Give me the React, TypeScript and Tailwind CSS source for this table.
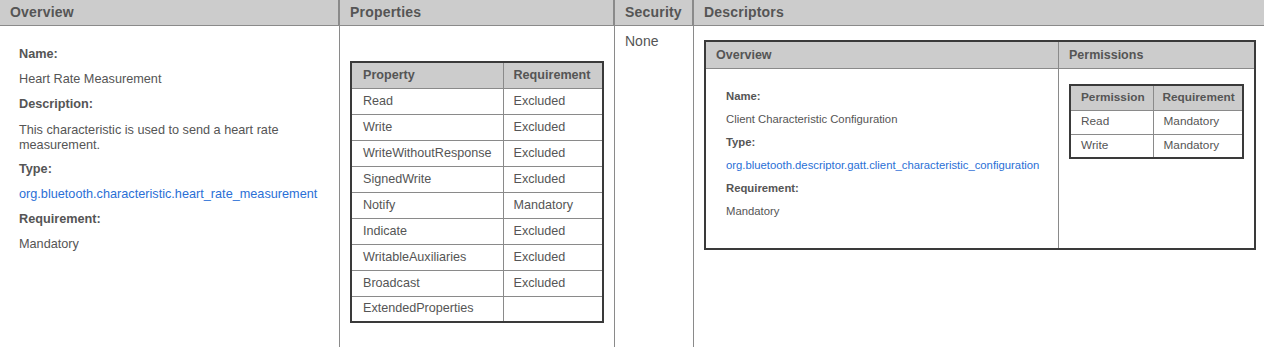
import React from "react"

const font = { fontFamily: '"Liberation Sans", Arial, sans-serif' }

const properties = [
    ["Read", "Excluded"],
    ["Write", "Excluded"],
    ["WriteWithoutResponse", "Excluded"],
    ["SignedWrite", "Excluded"],
    ["Notify", "Mandatory"],
    ["Indicate", "Excluded"],
    ["WritableAuxiliaries", "Excluded"],
    ["Broadcast", "Excluded"],
    ["ExtendedProperties", ""],
]

const permissions = [
    ["Read", "Mandatory"],
    ["Write", "Mandatory"],
]

function HeadCell({ children, last }: { children: React.ReactNode; last?: boolean }) {
    return (
        <div
            className={`h-[26px] bg-[#cccccc] border-b border-[#8a8a8a] px-[10px] flex items-center text-[14px] font-bold tracking-[0.2px] text-[#555] ${
                last ? "" : "border-r"
            }`}
        >
            {children}
        </div>
    )
}

export default function App() {
    return (
        <div style={font} className="w-[1264px] h-[347px] bg-white text-[#555] overflow-hidden">
            <div className="grid grid-cols-[340px_275px_79px_1fr] h-full">
                {/* Overview */}
                <div className="flex flex-col border-r border-[#8a8a8a]">
                    <HeadCell>Overview</HeadCell>
                    <div className="pl-[19px] pt-[16px] text-[12.7px] w-[320px]">
                        <div className="h-[25px] flex items-center font-bold">Name:</div>
                        <div className="h-[25px] flex items-center">Heart Rate Measurement</div>
                        <div className="h-[25px] flex items-center font-bold">Description:</div>
                        <div className="leading-[15px] pt-[6px] pb-[4px] pr-[10px]">
                            This characteristic is used to send a heart rate measurement.
                        </div>
                        <div className="h-[25px] flex items-center font-bold">Type:</div>
                        <div className="h-[25px] flex items-center text-[#2a6fd6]">
                            org.bluetooth.characteristic.heart_rate_measurement
                        </div>
                        <div className="h-[25px] flex items-center font-bold">Requirement:</div>
                        <div className="h-[25px] flex items-center">Mandatory</div>
                    </div>
                </div>

                {/* Properties */}
                <div className="flex flex-col border-r border-[#8a8a8a]">
                    <HeadCell>Properties</HeadCell>
                    <div className="pl-[10px] pt-[35px]">
                        <table className="table-fixed border-collapse border-2 border-[#3a3a3a] text-[12.6px] w-[254px]">
                            <thead>
                                <tr className="h-[26px] bg-[#cccccc]">
                                    <th className="border border-[#8a8a8a] text-left font-bold px-[11px] w-[152px]">Property</th>
                                    <th className="border border-[#8a8a8a] text-left font-bold px-[10px]">Requirement</th>
                                </tr>
                            </thead>
                            <tbody>
                                {properties.map(([p, r]) => (
                                    <tr key={p} className="h-[26px]">
                                        <td className="border border-[#8a8a8a] px-[11px] whitespace-nowrap">{p}</td>
                                        <td className="border border-[#8a8a8a] px-[10px]">{r}</td>
                                    </tr>
                                ))}
                            </tbody>
                        </table>
                    </div>
                </div>

                {/* Security */}
                <div className="flex flex-col border-r border-[#8a8a8a]">
                    <HeadCell>Security</HeadCell>
                    <div className="px-[10px] pt-[5px] text-[14px]">None</div>
                </div>

                {/* Descriptors */}
                <div className="flex flex-col">
                    <HeadCell last>Descriptors</HeadCell>
                    <div className="pl-[10px] pt-[14px] pr-[8px]">
                        <div className="border-2 border-[#3a3a3a] grid grid-cols-[353px_1fr] text-[11.3px]">
                            <div className="flex flex-col border-r border-[#8a8a8a]">
                                <div className="h-[27px] bg-[#cccccc] border-b border-[#8a8a8a] px-[10px] flex items-center text-[12.5px] font-bold">
                                    Overview
                                </div>
                                <div className="pl-[20px] pt-[16px] pb-[25px]">
                                    <div className="h-[23px] flex items-center font-bold">Name:</div>
                                    <div className="h-[23px] flex items-center">Client Characteristic Configuration</div>
                                    <div className="h-[23px] flex items-center font-bold">Type:</div>
                                    <div className="h-[23px] flex items-center text-[#2a6fd6]">
                                        org.bluetooth.descriptor.gatt.client_characteristic_configuration
                                    </div>
                                    <div className="h-[23px] flex items-center font-bold">Requirement:</div>
                                    <div className="h-[23px] flex items-center">Mandatory</div>
                                </div>
                            </div>
                            <div className="flex flex-col">
                                <div className="h-[27px] bg-[#cccccc] border-b border-[#8a8a8a] px-[10px] flex items-center text-[12.5px] font-bold">
                                    Permissions
                                </div>
                                <div className="pl-[10px] pt-[15px]">
                                    <table className="table-fixed border-collapse border-2 border-[#3a3a3a] w-[175px] text-[11.8px]">
                                        <thead>
                                            <tr className="h-[25px] bg-[#cccccc]">
                                                <th className="border border-[#8a8a8a] font-semibold text-left px-[10px] w-[83px]">Permission</th>
                                                <th className="border border-[#8a8a8a] font-semibold text-left px-[9px]">Requirement</th>
                                            </tr>
                                        </thead>
                                        <tbody>
                                            {permissions.map(([p, r]) => (
                                                <tr key={p} className="h-[24px]">
                                                    <td className="border border-[#8a8a8a] px-[10px]">{p}</td>
                                                    <td className="border border-[#8a8a8a] px-[10px]">{r}</td>
                                                </tr>
                                            ))}
                                        </tbody>
                                    </table>
                                </div>
                            </div>
                        </div>
                    </div>
                </div>
            </div>
        </div>
    )
}
